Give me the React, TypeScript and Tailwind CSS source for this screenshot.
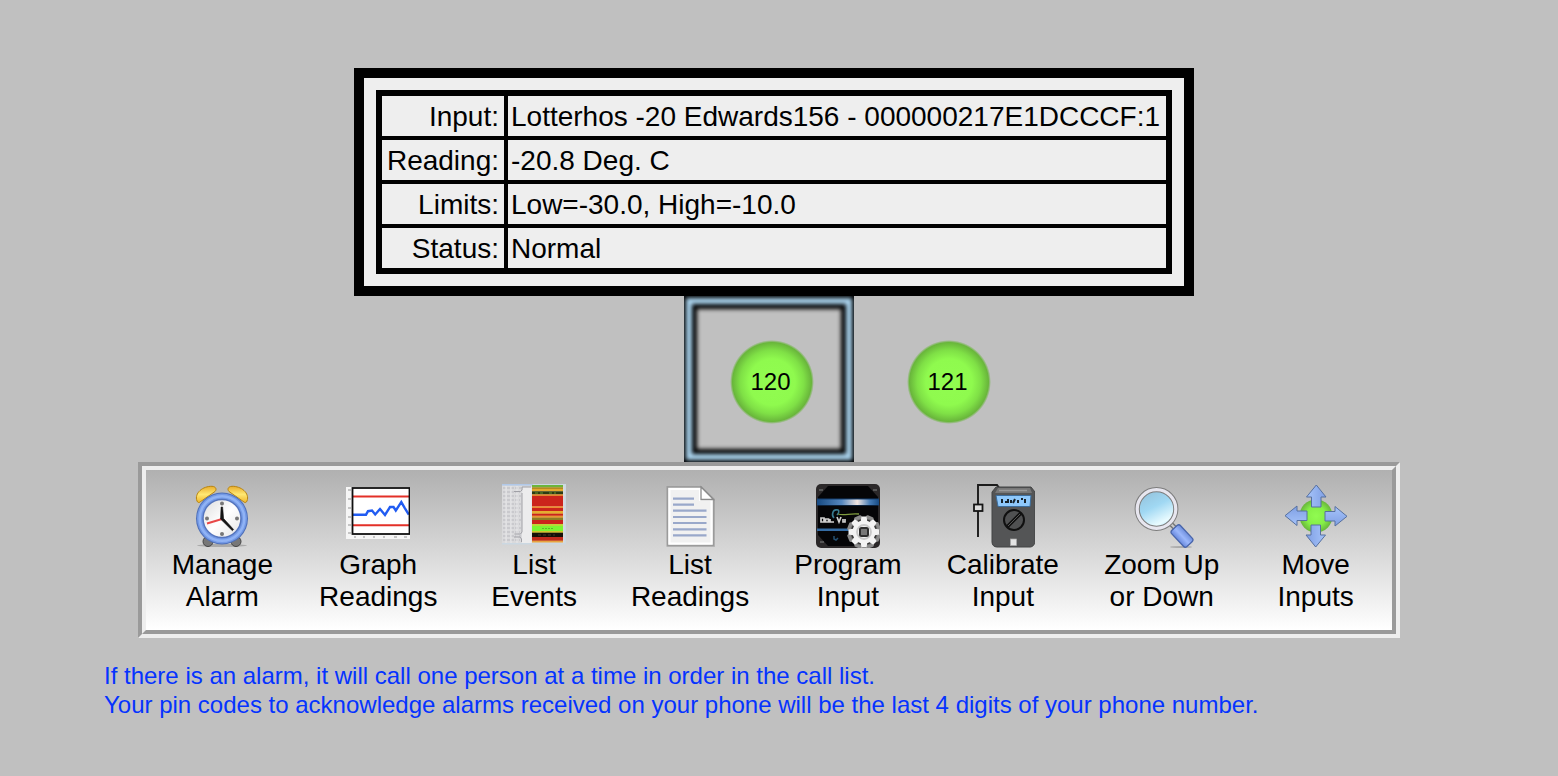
import { useState, type ReactNode } from "react";

const details = [
  { label: "Input:", value: "Lotterhos -20 Edwards156 - 000000217E1DCCCF:1" },
  { label: "Reading:", value: "-20.8 Deg. C" },
  { label: "Limits:", value: "Low=-30.0, High=-10.0" },
  { label: "Status:", value: "Normal" },
];

function Icon({ children }: { children: ReactNode }) {
  return (
    <svg viewBox="0 0 64 64" className="size-16 shrink-0" aria-hidden="true">
      {children}
    </svg>
  );
}

function AlarmIcon() {
  return (
    <Icon>
      <defs>
        <linearGradient id="bell" x1="0" y1="0" x2="0" y2="1">
          <stop offset="0" stopColor="#e9ad2c" />
          <stop offset="0.5" stopColor="#ffe873" />
          <stop offset="1" stopColor="#f0b62c" />
        </linearGradient>
        <linearGradient id="face" x1="0" y1="0" x2="1" y2="1">
          <stop offset="0" stopColor="#dcdcdc" />
          <stop offset="0.5" stopColor="#ffffff" />
          <stop offset="1" stopColor="#e4e4e4" />
        </linearGradient>
      </defs>
      <ellipse cx="32" cy="61.5" rx="25" ry="1.5" fill="#000" opacity="0.2" />
      <circle cx="18" cy="57.5" r="5" fill="#777" stroke="#444" />
      <circle cx="46" cy="57.5" r="5" fill="#777" stroke="#444" />
      <path d="M7 17C4 9 13 2 22 2.300c4 .2 5 3.200 3 5.200L10 18c-1 1-2.500.5-3-1Z" fill="url(#bell)" stroke="#b78412" />
      <path d="M57 17c3-8-6-15-15-14.700-4 .2-5 3.200-3 5.200L54 18c1 1 2.500.5 3-1Z" fill="url(#bell)" stroke="#b78412" />
      <circle cx="32" cy="34.500" r="26" fill="#4f70b8" />
      <circle cx="32" cy="34.500" r="25" fill="#7399e6" />
      <circle cx="32" cy="34.500" r="22.300" fill="none" stroke="#90b3f5" strokeWidth="2.500" />
      <circle cx="32" cy="34.500" r="19" fill="url(#face)" stroke="#5575bd" strokeWidth="1.500" />
      <g fill="#777">
        <circle cx="32" cy="19.500" r="2" />
        <circle cx="32" cy="50" r="2" />
        <circle cx="17" cy="34.500" r="2" />
        <circle cx="47" cy="34.500" r="2" />
      </g>
      <path d="m32 35-15 4.500" stroke="#e84848" strokeWidth="2" />
      <path d="m30.500 35 .6-12h1.500l1 11.500 10 11-1.200 1.200Z" fill="#151515" stroke="#151515" strokeWidth="0.600" />
    </Icon>
  );
}

function GraphIcon() {
  return (
    <Icon>
      <rect y="3" width="64" height="52" fill="#f6f6f6" />
      <path d="M2 6h3M2 15h3M2 24h3M2 33h3M2 41h3M2 49h3M8 53h2M17 53h2M27 53h2M37 53h2M48 53h3M58 53h3" stroke="#b5b5b5" strokeWidth="1.500" />
      <rect x="6.500" y="4" width="57" height="46" fill="#fff" />
      <path d="M7 12.500h56M7 41.300h56" stroke="#e33028" strokeWidth="2" />
      <path d="M7 30.700h13l2-3.500 4-.7 3.200 4 4.800-5.500 5 6 5-8h3.500l2.300 3.500 2.200-3.300 3.300-5.100 3.500 6 4 6.500" fill="none" stroke="#215cf2" strokeWidth="2.400" />
      <rect x="6.500" y="4" width="57" height="46" fill="none" stroke="#101010" strokeWidth="1.800" />
    </Icon>
  );
}

const stripes: [number, number, string][] = [
  [1, 2.3, "#6db53c"], [3.3, 1.7, "#b58b20"], [5, 2.3, "#e4a92e"],
  [7.3, 3, "#2c3c12"], [10.3, 1.7, "#e0862c"], [12, 10.3, "#cb241c"],
  [22.3, 1.7, "#ec8b32"], [24, 3, "#cb241c"], [27, 2.7, "#e5ad30"],
  [29.7, 2, "#cb241c"], [31.7, 2, "#e79534"], [33.7, 2.3, "#8d7d24"],
  [36, 4, "#cb241c"], [40, 2, "#bbd637"], [42, 5, "#7cf432"],
  [47, 1.7, "#d3c22d"], [48.7, 4.3, "#151008"], [53, 3.7, "#c02a1c"],
  [56.7, 1.6, "#e6a440"],
];

function EventsIcon() {
  return (
    <Icon>
      <rect width="64" height="60.500" fill="#cbd8e2" />
      <rect y="1.500" width="62.500" height="57.500" fill="#dadadc" />
      <rect width="31" height="1.500" fill="#b1c8e8" />
      <path d="M1 4h18M1 8h17M1 12h18M1 16h17M1 20h18M1 24h17M1 28h18M1 32h17M1 36h18M1 40h17M1 44h18M1 48h17M1 52h18M1 56h17" stroke="#c3c3c8" strokeWidth="1.500" strokeDasharray="3 1" />
      <path d="M4 2v57M9 2v57M15 2v57" stroke="#e8e8ea" strokeWidth="1" />
      <path d="M21 3h8.700v56H20V10Z" fill="#ececed" />
      <path d="M29 3h-9v3l-1.500 1.500H12M20 9v39l-1.500 2h-6M12 53h6l1.500 2v3" fill="none" stroke="#a0a0a6" strokeWidth="1" />
      {stripes.map(([y, h, fill]) => (
        <rect key={y} x="30" y={y} width="31" height={h + 0.2} fill={fill} />
      ))}
      <path d="M33 9h10M47 9h7" stroke="#65952d" strokeDasharray="3 2" />
      <path d="M40 44.500h12" stroke="#5abb2c" strokeDasharray="2 1" />
      <path d="M36 51h17" stroke="#453828" strokeDasharray="3 2" />
    </Icon>
  );
}

function DocumentIcon() {
  return (
    <Icon>
      <path d="M8.500 2h35L57 15v48H8.500Z" fill="#777" opacity="0.300" />
      <path d="M9.500 3H43l12.500 12.500V61.500h-46Z" fill="#f1f1f1" stroke="#9b9b9b" strokeWidth="1.500" />
      <path d="M11.500 5H42v11h11.500v43.500h-42Z" fill="none" stroke="#fff" strokeWidth="2" />
      <path d="M15 14.700h21M15 20.700h21M15 26.700h33.500M15 33h33.500M15 39h33.500M15 45.300h33.500M15 51.300h33.500" stroke="#99a8ca" strokeWidth="2.200" />
      <path d="M43 3 55.500 15.500H43Z" fill="#fff" stroke="#8b8b8b" strokeWidth="1.300" />
    </Icon>
  );
}

function ProgramIcon() {
  const tooth = "M45.500 32.500h5l1 6h-7ZM45.500 63.500h5l1-6h-7ZM32.500 45.500v5l6 1v-7ZM63.500 45.500v5l-6 1v-7Z";
  return (
    <Icon>
      <defs>
        <linearGradient id="beam">
          <stop offset="0" stopColor="#174a82" />
          <stop offset="0.400" stopColor="#5688bf" />
          <stop offset="0.650" stopColor="#f2e5e0" />
          <stop offset="0.850" stopColor="#467cb6" />
          <stop offset="1" stopColor="#174a82" />
        </linearGradient>
      </defs>
      <rect width="64" height="64" rx="5" fill="#2b2829" />
      <path d="M12 2h40l10 11v38L52 62H12L2 51V13Z" fill="#050507" />
      <path d="M3 6h4M57 6h4M4 58h4" stroke="#555" strokeWidth="2" />
      <rect x="1" y="14.500" width="62" height="7" fill="#153f70" />
      <rect x="1" y="15.500" width="62" height="5.500" fill="url(#beam)" />
      <rect x="1" y="44.500" width="34" height="2.500" fill="#356ca4" />
      <path d="M21 26c-4-1-6 5-3 8m2-8c3-1 4 2 1 5" fill="none" stroke="#387b91" strokeWidth="1.600" />
      <path d="M22 30c6 2 12-1 21 0" fill="none" stroke="#7f9b3f" strokeWidth="1.300" />
      <path d="M5 34v4h3v-4ZM9.500 35v3h3v-3ZM14 35v3h4M21 33l2 5 2-5M27 35v3h2v-3" fill="none" stroke="#cfcfcf" strokeWidth="1.700" />
      <path d="M18 52v3l2 1 2-2" fill="none" stroke="#245072" strokeWidth="1.500" />
      <g fill="#777" stroke="#8b8b8b" strokeWidth="3" strokeLinejoin="round">
        <circle cx="48" cy="48" r="12" />
        <path d={tooth} transform="rotate(22 48 48)" />
        <path d={tooth} transform="rotate(67 48 48)" />
      </g>
      <circle cx="48" cy="48" r="13" fill="#333" />
      <g fill="#f3f3f3">
        <circle cx="48" cy="48" r="11.500" />
        <path d={tooth} />
        <path d={tooth} transform="rotate(45 48 48)" />
      </g>
      <circle cx="48" cy="48" r="7" fill="none" stroke="#c8c8c8" strokeWidth="1.800" />
      <rect x="44" y="44" width="8" height="8" rx="1.500" fill="#777" stroke="#2d2d2d" strokeWidth="2" />
    </Icon>
  );
}

function MeterIcon() {
  return (
    <Icon>
      <path d="M7 53V1h19l3 4" fill="none" stroke="#1b1b1b" strokeWidth="1.900" />
      <rect x="3" y="20.500" width="8.500" height="6.500" fill="#dedede" stroke="#151515" strokeWidth="1.800" />
      <path d="M25 3h35l4 5v49c0 3-2 6-5 6H26c-3 0-5-2-5-5V8Z" fill="#545556" stroke="#434444" />
      <path d="M27 4h32l2 5H24Z" fill="#777" />
      <path d="M28 6.500h28" stroke="#999" strokeWidth="1.500" />
      <path d="M25 11.500h35l-1 11H27Z" fill="#8ec8fb" stroke="#3d6d9b" />
      <path d="M31 15v4M34 18h2M37 15v4M40 16v3M44 15l-2 4M47 16v3M50 15h2M54 15v4" stroke="#17232c" strokeWidth="2" />
      <circle cx="43" cy="36" r="10" fill="#505152" stroke="#101010" strokeWidth="2" />
      <path d="m36 43 14-14" stroke="#101010" strokeWidth="3.500" />
      <path d="m37 42 12-12" stroke="#555" strokeWidth="1" />
      <rect x="39.500" y="55" width="6" height="6.500" fill="#e4e4e4" stroke="#aaa" strokeWidth="0.700" />
    </Icon>
  );
}

function ZoomIcon() {
  return (
    <Icon>
      <defs>
        <linearGradient id="lens" x1="0.2" y1="0" x2="0.7" y2="1">
          <stop offset="0" stopColor="#93c0da" />
          <stop offset="0.45" stopColor="#a0d8f3" />
          <stop offset="0.85" stopColor="#e9fbff" />
          <stop offset="1" stopColor="#b9eaff" />
        </linearGradient>
        <linearGradient id="handle" x1="0" y1="0" x2="0" y2="1">
          <stop offset="0" stopColor="#6f8fdd" />
          <stop offset="0.5" stopColor="#9bb7fb" />
          <stop offset="1" stopColor="#6888dc" />
        </linearGradient>
      </defs>
      <ellipse cx="51" cy="63" rx="11" ry="1" fill="#000" opacity="0.2" />
      <path d="m40 39 5 5" stroke="#777" strokeWidth="5" />
      <path d="m40 39 5 5" stroke="#ccc" strokeWidth="2" />
      <rect x="-11" y="-6" width="22" height="12" rx="2.500" fill="url(#handle)" stroke="#4965aa" strokeWidth="1.300" transform="translate(52 52) rotate(47)" />
      <circle cx="26.500" cy="25" r="19.300" fill="url(#lens)" stroke="#7d7d7d" strokeWidth="5.200" />
      <circle cx="26.500" cy="25" r="19.300" fill="none" stroke="#e7e6ef" strokeWidth="3.200" />
    </Icon>
  );
}

function MoveIcon() {
  const arrow = "M32.300 1 42 13h-5v10h-9.500V13h-5Z";
  return (
    <Icon>
      <defs>
        <radialGradient id="dot">
          <stop offset="0" stopColor="#91fb51" />
          <stop offset="0.6" stopColor="#85ef47" />
          <stop offset="1" stopColor="#69b63c" />
        </radialGradient>
        <linearGradient id="arrow">
          <stop offset="0" stopColor="#a6c4fa" />
          <stop offset="1" stopColor="#7f9fe4" />
        </linearGradient>
      </defs>
      <circle cx="32" cy="32" r="16.500" fill="url(#dot)" />
      <g fill="url(#arrow)" stroke="#56709f">
        <path d={arrow} />
        <path d={arrow} transform="rotate(90 32 32)" />
        <path d={arrow} transform="rotate(180 32 32)" />
        <path d={arrow} transform="rotate(270 32 32)" />
      </g>
    </Icon>
  );
}

const actions = [
  { lines: ["Manage", "Alarm"], icon: <AlarmIcon /> },
  { lines: ["Graph", "Readings"], icon: <GraphIcon /> },
  { lines: ["List", "Events"], icon: <EventsIcon /> },
  { lines: ["List", "Readings"], icon: <DocumentIcon /> },
  { lines: ["Program", "Input"], icon: <ProgramIcon /> },
  { lines: ["Calibrate", "Input"], icon: <MeterIcon /> },
  { lines: ["Zoom Up", "or Down"], icon: <ZoomIcon /> },
  { lines: ["Move", "Inputs"], icon: <MoveIcon /> },
];

const frame =
  "shadow-[inset_0_0_4px_2px_#000,inset_0_0_4px_8px_#add7f2,inset_0_0_4px_13px_#000]";

function InputLight({ id, selected, onSelect, className = "" }: {
  id: string;
  selected: boolean;
  onSelect: () => void;
  className?: string;
}) {
  return (
    <button
      type="button"
      aria-pressed={selected}
      onClick={onSelect}
      className={`flex h-[166px] items-center justify-center pt-[6px] pl-[6px] ${selected ? frame : ""} ${className}`}
    >
      <span className="flex size-[84px] items-center justify-center rounded-full bg-[radial-gradient(circle_closest-side,#91fc50_0%,#8ffa4e_55%,#7fe046_76%,#69b63b_94%,transparent_100%)] pr-[3px] text-2xl">
        {id}
      </span>
    </button>
  );
}

export default function App() {
  const [selected, setSelected] = useState("120");

  return (
    <div className="min-h-screen bg-[#c0c0c0] pt-[68px] pr-5 font-['Liberation_Sans',Arial,sans-serif] text-black">
      <main>
        <section className="flex justify-center pl-[10px]">
          <div className="border-[10px] border-black bg-[#eee] p-3">
            <table className="border-separate border-spacing-1 border-2 border-black bg-black text-[28px] leading-8">
              <tbody>
                {details.map((row) => (
                  <tr key={row.label}>
                    <th scope="row" className="h-10 min-w-[122px] bg-[#eee] pt-[2px] pr-[5px] pl-1 text-right font-normal">
                      {row.label}
                    </th>
                    <td className="h-10 min-w-[658px] bg-[#eee] px-[3px] pt-[2px]">{row.value}</td>
                  </tr>
                ))}
              </tbody>
            </table>
          </div>
        </section>

        <section className="grid grid-cols-[170px_170px_170px] justify-center gap-[7px]">
          <InputLight id="120" selected={selected === "120"} onSelect={() => setSelected("120")} className="col-start-2" />
          <InputLight id="121" selected={selected === "121"} onSelect={() => setSelected("121")} />
        </section>

        <nav className="mx-auto w-[82%] min-w-[1200px] border-4 border-t-[#9a9a9a] border-r-[#eee] border-b-[#eee] border-l-[#9a9a9a]">
          <div className="grid grid-cols-[152fr_160fr_152fr_160fr_156fr_154fr_164fr_144fr] border-4 border-t-[#eee] border-r-[#9a9a9a] border-b-[#9a9a9a] border-l-[#eee] bg-linear-to-b from-[#b0b0b0] to-white pr-1">
            {actions.map(({ lines, icon }) => (
              <button key={lines.join(" ")} type="button" className="flex flex-col items-center pt-[14px] pb-[17px] text-[28px] leading-8">
                {icon}
                <span className="mt-px block">{lines[0]}</span>
                <span className="block">{lines[1]}</span>
              </button>
            ))}
          </div>
        </nav>

        <p className="mt-[23px] ml-[104px] text-2xl leading-[29px] text-[#0533ff]">
          If there is an alarm, it will call one person at a time in order in the call list.
          <br />
          Your pin codes to acknowledge alarms received on your phone will be the last 4 digits of your phone number.
        </p>
      </main>
    </div>
  );
}
